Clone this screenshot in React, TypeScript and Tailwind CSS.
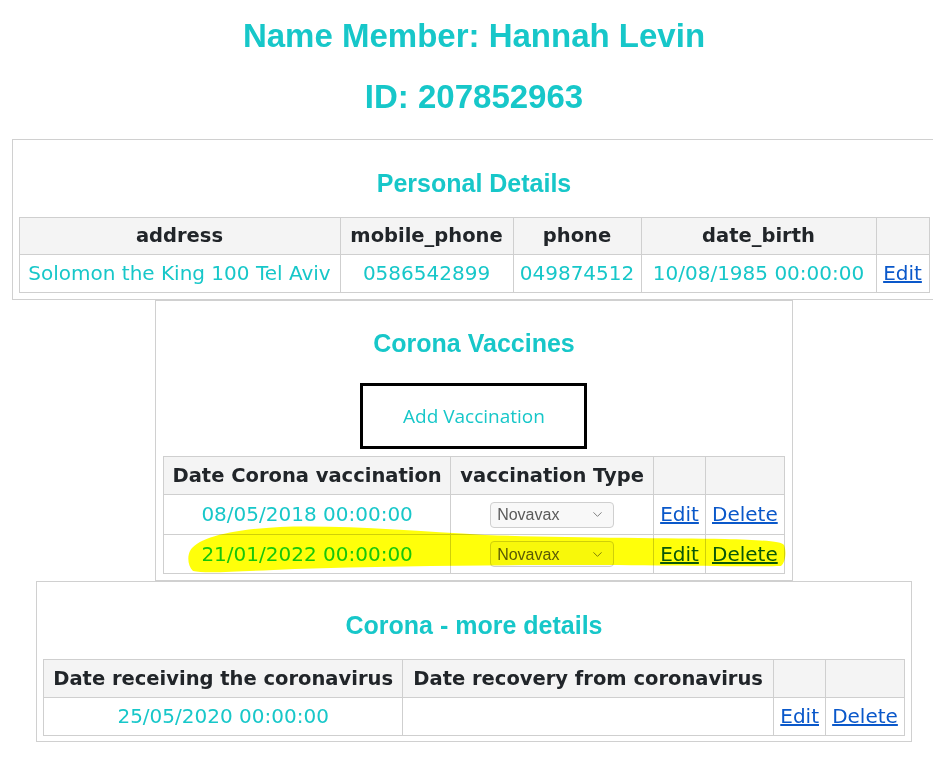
import { ChevronDown } from 'lucide-react';

// Member card page: personal details, vaccines and corona info tables
const cyan = 'text-[#17c7c9]';

function SectionBox({ title, children, pad = 'p-[6px]' }: { title: string; children: React.ReactNode; pad?: string }) {
  return (
    <div className={`w-fit border border-[#d0d0d0] bg-white ${pad} flex flex-col items-center`}>
      <h3 className={`font-['Liberation_Sans',Arial,sans-serif] font-bold text-[25px] leading-[29px] ${cyan} mt-[23px] mb-[19px]`}>
        {title}
      </h3>
      {children}
    </div>
  );
}

const th = 'border border-[#cfcfcf] bg-[#f4f4f4] px-[6px] py-[6px] text-[19.5px] leading-[24px] font-bold text-[#212529] text-center whitespace-nowrap';
const td = 'border border-[#cfcfcf] px-[6px] py-[6px] text-[20px] leading-[25px] text-center whitespace-nowrap';
const link = 'text-[#0a58ca] underline';

function NovavaxSelect() {
  return (
    <div className="mx-auto flex h-[26px] w-[124px] items-center justify-between rounded-[4px] border border-[#cfcfcf] bg-[#f8f8f8] pl-[6px] pr-[8px]">
      <span className="font-['Liberation_Sans',Arial,sans-serif] text-[16px] text-[#5a5a5a]">Novavax</span>
      <ChevronDown className="h-[15px] w-[15px] text-[#777]" strokeWidth={1.5} />
    </div>
  );
}

const vaccines = [
  { date: '08/05/2018 00:00:00', h: 'h-[40px]' },
  { date: '21/01/2022 00:00:00', h: 'h-[39px]' },
];

export default function App() {
  return (
    <div className="w-[933px] overflow-hidden bg-white font-['DejaVu_Sans',Verdana,sans-serif]">
      <div className="relative flex w-[948px] flex-col items-center pb-[24px]">
        <h1 className={`mt-[17px] font-['Liberation_Sans',Arial,sans-serif] text-[33px] leading-[38px] font-bold ${cyan}`}>
          Name Member: Hannah Levin
        </h1>
        <h1 className={`mt-[23px] mb-[23px] font-['Liberation_Sans',Arial,sans-serif] text-[33px] leading-[38px] font-bold ${cyan}`}>
          ID: 207852963
        </h1>

        {/* personal details */}
        <SectionBox title="Personal Details" pad="pt-[6px] px-[6px] pb-[6px]">
          <table className="border-collapse">
            <thead>
              <tr>
                <th className={`${th} w-[321px]`}>address</th>
                <th className={`${th} w-[173px]`}>mobile_phone</th>
                <th className={`${th} w-[128px]`}>phone</th>
                <th className={`${th} w-[235px]`}>date_birth</th>
                <th className={`${th} w-[53px]`}></th>
              </tr>
            </thead>
            <tbody>
              <tr>
                <td className={`${td} ${cyan}`}>Solomon the King 100 Tel Aviv</td>
                <td className={`${td} ${cyan}`}>0586542899</td>
                <td className={`${td} ${cyan}`}>049874512</td>
                <td className={`${td} ${cyan}`}>10/08/1985 00:00:00</td>
                <td className={td}><a className={link}>Edit</a></td>
              </tr>
            </tbody>
          </table>
        </SectionBox>

        {/* vaccines */}
        <div className="w-fit border border-[#d0d0d0] bg-white pt-[7px] px-[7px] pb-[6px] flex flex-col items-center">
          <h3 className={`font-['Liberation_Sans',Arial,sans-serif] font-bold text-[25px] leading-[29px] ${cyan} mt-[21px] mb-[25px]`}>
            Corona Vaccines
          </h3>
          <button className={`h-[66px] w-[227px] border-[3px] border-black font-['Open_Sans',sans-serif] text-[19px] ${cyan}`}>
            Add Vaccination
          </button>
          <table className="mt-[7px] border-collapse">
            <thead>
              <tr>
                <th className={`${th} h-[38px] w-[287px]`}>Date Corona vaccination</th>
                <th className={`${th} w-[203px]`}>vaccination Type</th>
                <th className={`${th} w-[51px]`}></th>
                <th className={`${th} w-[79px]`}></th>
              </tr>
            </thead>
            <tbody>
              {vaccines.map((v) => (
                <tr key={v.date} className={v.h}>
                  <td className={`${td} ${cyan}`}>{v.date}</td>
                  <td className={td}><NovavaxSelect /></td>
                  <td className={td}><a className={link}>Edit</a></td>
                  <td className={td}><a className={link}>Delete</a></td>
                </tr>
              ))}
            </tbody>
          </table>
        </div>

        {/* more details */}
        <SectionBox title="Corona - more details" pad="pt-[6px] px-[6px] pb-[5px]">
          <table className="border-collapse">
            <thead>
              <tr>
                <th className={`${th} h-[38px] w-[359px]`}>Date receiving the coronavirus</th>
                <th className={`${th} w-[371px]`}>Date recovery from coronavirus</th>
                <th className={`${th} w-[52px]`}></th>
                <th className={`${th} w-[78px]`}></th>
              </tr>
            </thead>
            <tbody>
              <tr>
                <td className={`${td} ${cyan}`}>25/05/2020 00:00:00</td>
                <td className={td}></td>
                <td className={td}><a className={link}>Edit</a></td>
                <td className={td}><a className={link}>Delete</a></td>
              </tr>
            </tbody>
          </table>
        </SectionBox>

        {/* yellow marker stroke over the second vaccine row */}
        <svg
          className="pointer-events-none absolute left-[185px] top-[521px] mix-blend-multiply"
          width="605"
          height="56"
          viewBox="0 0 605 56"
        >
          <path
            d="M5 30 C 12 18, 40 9, 95 6 C 160 4, 230 10, 300 14 C 380 17, 480 17, 540 18 C 575 19, 597 20, 599 24 C 602 32, 600 42, 596 45 C 560 46, 470 44, 380 44 C 300 44, 200 45, 110 48 C 60 50, 20 53, 8 50 C 3 45, 2 36, 5 30 Z"
            fill="#ffff0a"
          />
        </svg>
      </div>
    </div>
  );
}
